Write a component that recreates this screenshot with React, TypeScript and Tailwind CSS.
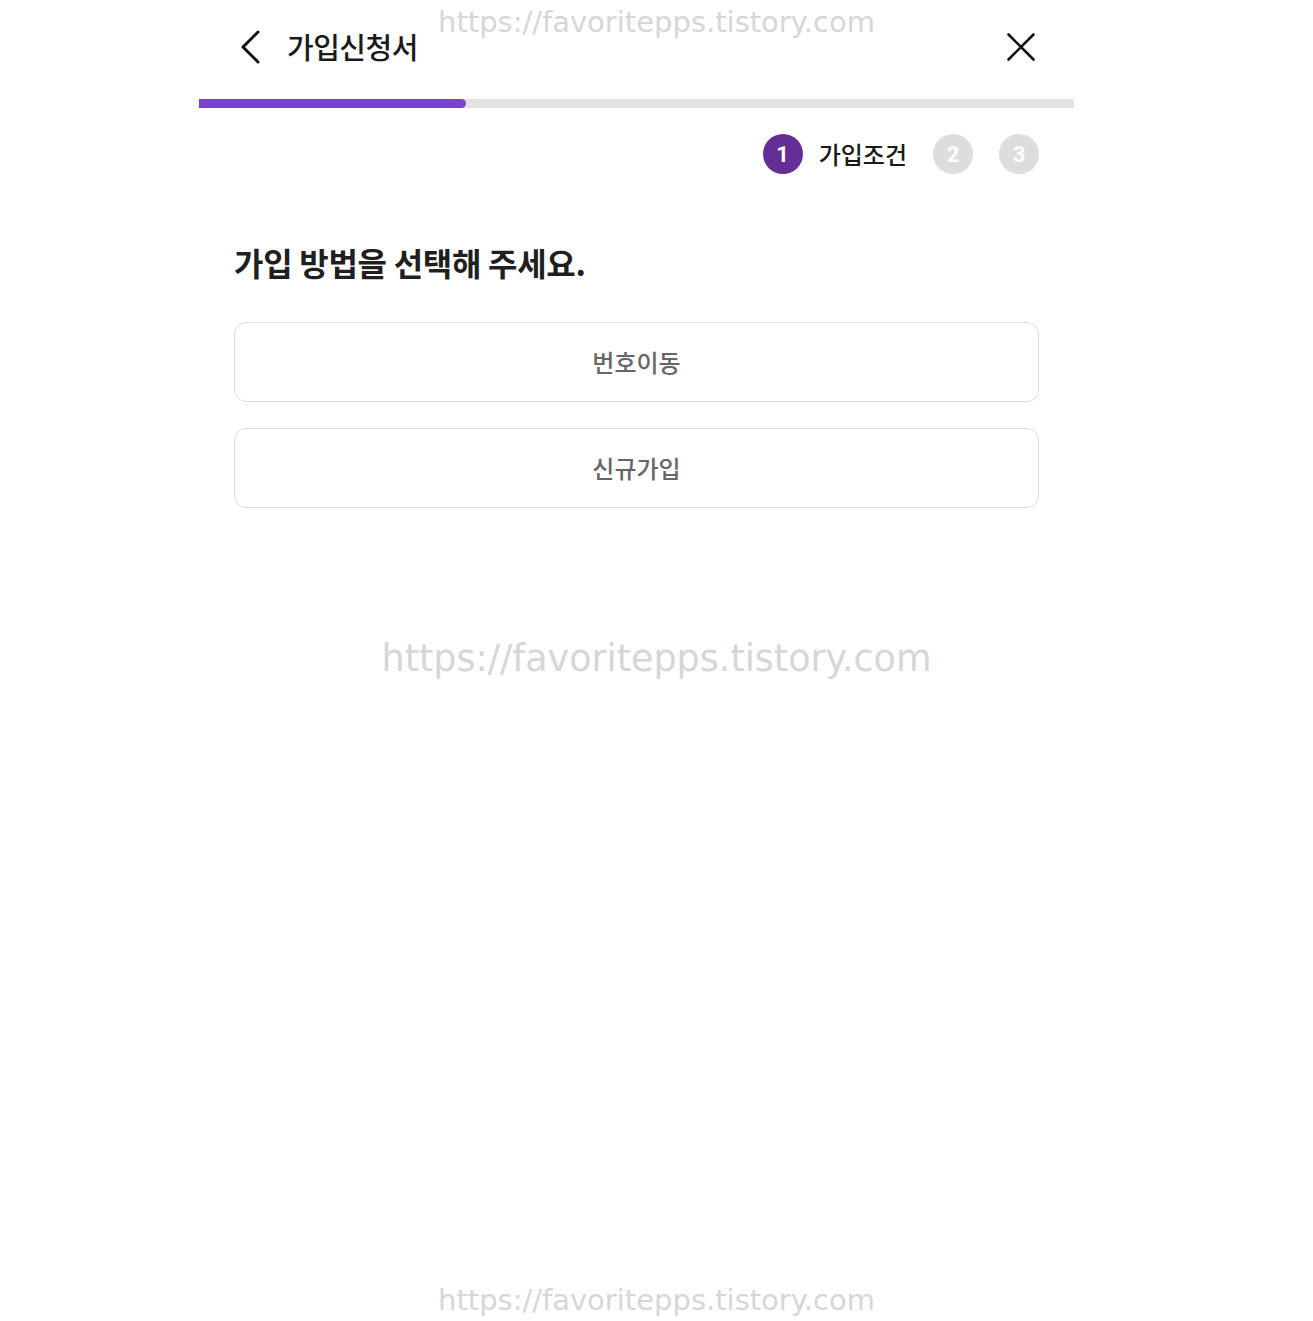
import React from "react";

const kr = { fontFamily: '"Noto Sans CJK KR", "Noto Sans", sans-serif' };
const wm = { fontFamily: '"DejaVu Sans", sans-serif' };

function Watermark({ className }: { className: string }) {
  return (
    <div
      style={wm}
      className={`pointer-events-none absolute left-0 right-0 text-center text-[#d6d6d6] ${className}`}
    >
      https://favoritepps.tistory.com
    </div>
  );
}

export default function App() {
  const steps = [2, 3];

  return (
    <div className="relative h-[1321px] w-full bg-white" style={kr}>
      <div className="ml-[199px] w-[875px]">
        {/* Header */}
        <header className="flex h-[99px] items-center justify-between pl-[40px] pr-[39px] pb-[6px]">
          <div className="flex items-center gap-[24px]">
            <svg width="24" height="34" viewBox="0 0 24 34" fill="none">
              <path d="M19 2 L4 17 L19 32" stroke="#111" strokeWidth="3" strokeLinecap="round" strokeLinejoin="round" />
            </svg>
            <h1 className="text-[29px] font-medium leading-none tracking-[-0.5px] text-[#1a1a1a]">가입신청서</h1>
          </div>
          <svg width="28" height="28" viewBox="0 0 28 28" fill="none">
            <path d="M1.5 1.5 L26.5 26.5 M26.5 1.5 L1.5 26.5" stroke="#111" strokeWidth="2.6" strokeLinecap="round" />
          </svg>
        </header>

        {/* Progress */}
        <div className="h-[9px] w-full bg-[#e3e3e3]">
          <div className="h-full w-[267px] rounded-r-full bg-[#7b41cf]" />
        </div>

        {/* Steps */}
        <div className="flex items-center justify-end gap-[26px] pr-[35px] pt-[26px]">
          <div className="flex items-center gap-[16px]">
            <span
              style={{ fontFamily: "Roboto, sans-serif" }}
              className="flex h-[40px] w-[40px] items-center justify-center rounded-full bg-[#632f96] text-[22px] font-bold text-white"
            >
              1
            </span>
            <span className="text-[24px] font-medium leading-none text-[#1a1a1a]">가입조건</span>
          </div>
          {steps.map((n) => (
            <span
              key={n}
              style={{ fontFamily: "Roboto, sans-serif" }}
              className="flex h-[40px] w-[40px] items-center justify-center rounded-full bg-[#dddddd] text-[22px] font-bold text-white"
            >
              {n}
            </span>
          ))}
        </div>

        {/* Body */}
        <div className="px-[35px] pt-[72px]">
          <h2 className="text-[32px] font-bold leading-none tracking-[-0.3px] text-[#1f1f1f]">
            가입 방법을 선택해 주세요.
          </h2>
          <div className="mt-[44px] flex flex-col gap-[26px]">
            {["번호이동", "신규가입"].map((label) => (
              <button
                key={label}
                className="flex h-[80px] w-full items-center justify-center rounded-[12px] border border-[#dedede] bg-white text-[24px] font-medium text-[#666666]"
              >
                {label}
              </button>
            ))}
          </div>
        </div>
      </div>

      <Watermark className="top-[1px] text-[29px]" />
      <Watermark className="top-[632px] text-[36.5px]" />
      <Watermark className="top-[1279px] text-[29px]" />
    </div>
  );
}
